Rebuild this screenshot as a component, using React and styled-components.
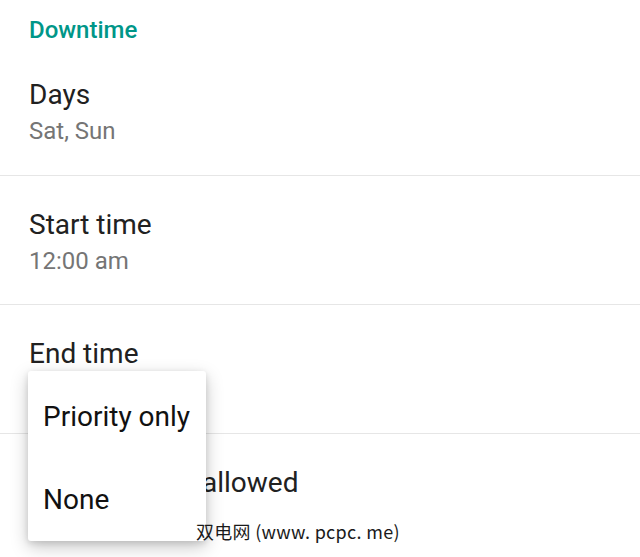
import React from "react";
import styled, { createGlobalStyle } from "styled-components";

const Global = createGlobalStyle`
  html, body { margin: 0; padding: 0; background: #ffffff; }
  body { font-family: Roboto, "Noto Sans", sans-serif; -webkit-font-smoothing: antialiased; }
  #root { width: 640px; height: 557px; overflow: hidden; }
`;

const Screen = styled.div`
  position: relative;
  width: 640px;
  height: 557px;
  overflow: hidden;
  background: #ffffff;
`;

const SectionHeader = styled.div`
  margin: 16px 0 2px;
  padding-left: 29px;
  font-size: 24px;
  line-height: 28px;
  font-weight: 500;
  color: #009688;
`;

const Row = styled.div`
  height: 129px;
  box-sizing: border-box;
  padding: 32px 0 0 29px;
  & + & {
    border-top: 1px solid #e6e6e6;
  }
`;

const Title = styled.div`
  font-size: 28px;
  line-height: 34px;
  color: #212121;
  white-space: pre;
`;

const Summary = styled.div`
  margin-top: 4px;
  font-size: 24px;
  line-height: 30px;
  color: #757575;
`;

const Menu = styled.div`
  position: absolute;
  left: 28px;
  top: 371px;
  width: 178px;
  height: 170px;
  box-sizing: border-box;
  padding: 4px 0 0;
  background: #ffffff;
  border-radius: 3px;
  box-shadow: 0 6px 18px rgba(0, 0, 0, 0.22), 0 2px 6px rgba(0, 0, 0, 0.12);
  display: flex;
  flex-direction: column;
`;

const MenuItem = styled.div`
  height: 83px;
  flex: none;
  display: flex;
  align-items: center;
  padding-left: 15px;
  font-size: 28px;
  color: #111111;
`;

const Watermark = styled.div`
  position: absolute;
  left: 196px;
  top: 521px;
  font-family: "Noto Sans CJK SC", sans-serif;
  font-size: 18px;
  line-height: 20px;
  letter-spacing: 0.3px;
  color: #1a1a1a;
  white-space: pre;
`;

const rows = [
  { title: "Days", summary: "Sat, Sun" },
  { title: "Start time", summary: "12:00 am" },
  { title: "End time" },
  { title: "Interruptions\u00a0 allowed" },
];

export default function App() {
  return (
    <>
      <Global />
      <Screen>
        <SectionHeader>Downtime</SectionHeader>
        {rows.map((r) => (
          <Row key={r.title}>
            <Title>{r.title}</Title>
            {r.summary && <Summary>{r.summary}</Summary>}
          </Row>
        ))}
        <Menu>
          <MenuItem>Priority only</MenuItem>
          <MenuItem>None</MenuItem>
        </Menu>
        <Watermark>{"双电网 (www. pcpc. me)"}</Watermark>
      </Screen>
    </>
  );
}
